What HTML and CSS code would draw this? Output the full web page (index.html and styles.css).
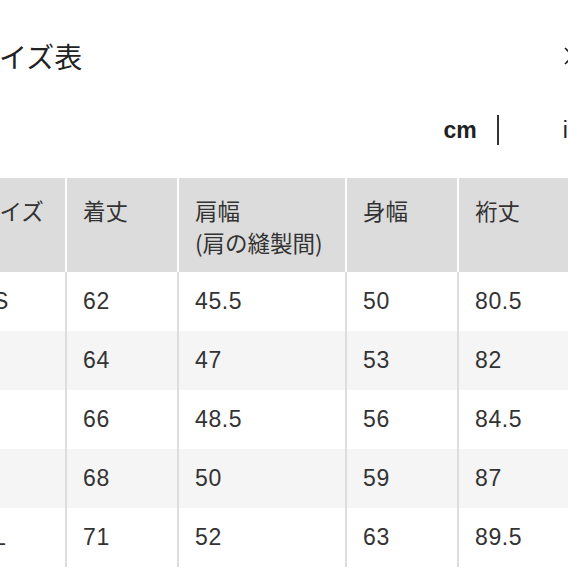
FILE: index.html
```html
<!DOCTYPE html>
<html lang="ja">
<head>
<meta charset="utf-8">
<link rel="stylesheet" href="styles.css">
</head>
<body>
<div class="page">
  <div class="head">
    <h1 class="title">サイズ表</h1>
    <svg class="close" viewBox="0 0 20 20" width="20" height="20">
      <path d="M2 2 L18 18 M18 2 L2 18" stroke="#222" stroke-width="1.6" fill="none"/>
    </svg>
  </div>
  <div class="units">
    <span class="unit active">cm</span>
    <span class="sep"></span>
    <span class="unit">inch</span>
  </div>
  <div class="table">
    <div class="row hrow">
      <div class="cell c1">サイズ</div>
      <div class="cell c2">着丈</div>
      <div class="cell c3">肩幅<br>(肩の縫製間)</div>
      <div class="cell c4">身幅</div>
      <div class="cell c5">裄丈</div>
    </div>
    <div class="row">
      <div class="cell c1">XS</div>
      <div class="cell c2">62</div>
      <div class="cell c3">45.5</div>
      <div class="cell c4">50</div>
      <div class="cell c5">80.5</div>
    </div>
    <div class="row alt">
      <div class="cell c1">S</div>
      <div class="cell c2">64</div>
      <div class="cell c3">47</div>
      <div class="cell c4">53</div>
      <div class="cell c5">82</div>
    </div>
    <div class="row">
      <div class="cell c1">M</div>
      <div class="cell c2">66</div>
      <div class="cell c3">48.5</div>
      <div class="cell c4">56</div>
      <div class="cell c5">84.5</div>
    </div>
    <div class="row alt">
      <div class="cell c1">L</div>
      <div class="cell c2">68</div>
      <div class="cell c3">50</div>
      <div class="cell c4">59</div>
      <div class="cell c5">87</div>
    </div>
    <div class="row">
      <div class="cell c1">XL</div>
      <div class="cell c2">71</div>
      <div class="cell c3">52</div>
      <div class="cell c4">63</div>
      <div class="cell c5">89.5</div>
    </div>
  </div>
</div>
</body>
</html>
```

FILE: styles.css
```css
html, body {
  margin: 0;
  padding: 0;
  background: #fff;
  overflow: hidden;
}
body {
  width: 568px;
  height: 568px;
  font-family: "Liberation Sans", "Noto Sans CJK JP", sans-serif;
  color: #333;
}
.page {
  margin-left: -39px;
  width: 660px;
}
.head {
  display: flex;
  justify-content: space-between;
  align-items: center;
  height: 38px;
  margin-top: 37px;
  padding: 0 38px 0 10px;
}
.title {
  margin: 0;
  font-family: "Noto Sans CJK JP", sans-serif;
  font-weight: 400;
  font-size: 28px;
  line-height: 38px;
  color: #222;
}
.close {
  display: block;
}
.units {
  display: flex;
  justify-content: flex-end;
  align-items: center;
  height: 30px;
  margin-top: 40px;
  padding-right: 16px;
}
.unit {
  font-size: 23px;
  line-height: 30px;
  color: #222;
}
.unit.active {
  font-weight: 700;
}
.sep {
  width: 2px;
  height: 30px;
  background: #333;
  margin: 0 64px 0 20px;
}
.table {
  margin-top: 33px;
}
.row {
  display: grid;
  grid-template-columns: 104px 112px 168px 112px 164px;
  height: 59px;
}
.row.alt {
  background: #f5f5f5;
}
.hrow {
  height: 94px;
  background: #dcdcdc;
}
.cell {
  display: flex;
  align-items: center;
  padding: 0 16px;
  font-size: 23px;
  letter-spacing: 0.6px;
  color: #333;
}
.row .cell + .cell {
  border-left: 2px solid #dddddd;
}
.hrow .cell {
  display: block;
  padding: 16px 16px 14px;
  line-height: 32px;
  font-family: "Noto Sans CJK JP", sans-serif;
  font-size: 22.5px;
  letter-spacing: 0;
  color: #333;
}
.hrow .cell + .cell {
  border-left: 2px solid #fff;
}
```
